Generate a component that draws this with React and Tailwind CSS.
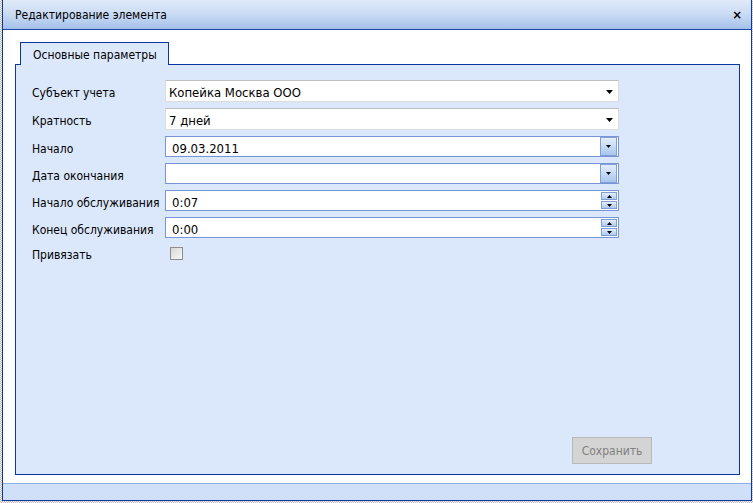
const FONT = "font-['DejaVu_Sans',Tahoma,sans-serif] font-stretch-condensed";

const ROWS = [
  { label: 'Субъект учета', value: 'Копейка Москва ООО', kind: 'combo', h: 'h-[28px]' },
  { label: 'Кратность', value: '7 дней', kind: 'combo', h: 'h-[28px]' },
  { label: 'Начало', value: '09.03.2011', kind: 'date', h: 'h-[27px]' },
  { label: 'Дата окончания', value: '', kind: 'date', h: 'h-[27px]' },
  { label: 'Начало обслуживания', value: '0:07', kind: 'spin', h: 'h-[27px]' },
  { label: 'Конец обслуживания', value: '0:00', kind: 'spin', h: 'h-[27px]' },
];

function Arrow({ up = false, big = false }) {
  const w = big ? 7 : 5;
  const h = big ? 4 : 3;
  return (
    <svg width={w} height={h} viewBox={`0 0 ${w} ${h}`} className="block">
      {up
        ? <polygon points={`0,${h} ${w},${h} ${w / 2},0`} fill="#000" />
        : <polygon points={`0,0 ${w},0 ${w / 2},${h}`} fill="#000" />}
    </svg>
  );
}

function Field({ row }) {
  if (row.kind === 'combo') {
    return (
      <div className="w-[454px] h-[22px] flex items-center bg-white border border-[#dcdcdc] border-t-[#c0c0c0]">
        <span className="flex-1 pl-[3px] pt-[3px] text-[13px] text-black leading-none whitespace-nowrap">{row.value}</span>
        <span className="w-[17px] pt-[2px] flex justify-center"><Arrow big /></span>
      </div>
    );
  }
  return (
    <div className="w-[454px] h-[21px] flex items-center bg-white border border-[#7895d6]">
      <span className="flex-1 pl-[6px] pt-[3px] text-[13px] text-black leading-none whitespace-nowrap">{row.value}</span>
      {row.kind === 'date' ? (
        <span className="w-[17px] h-[19px] mr-px flex items-center justify-center border border-[#7f9fd8] bg-gradient-to-b from-[#e4eefc] to-[#a9c5ef]">
          <Arrow />
        </span>
      ) : (
        <span className="mr-px flex flex-col gap-px">
          <span className="w-[16px] h-[8px] flex items-center justify-center border border-[#7f9fd8] bg-gradient-to-b from-[#e4eefc] to-[#aec8ef]"><Arrow up /></span>
          <span className="w-[16px] h-[8px] flex items-center justify-center border border-[#7f9fd8] bg-gradient-to-b from-[#e4eefc] to-[#aec8ef]"><Arrow /></span>
        </span>
      )}
    </div>
  );
}

export default function App() {
  return (
    <div className={`w-[753px] h-[503px] pl-[2px] pr-[1px] bg-[repeating-conic-gradient(#b9b9b9_0_25%,#f4f4f4_0_50%)] bg-[length:2px_2px] ${FONT}`}>
      <div className="h-[501px] flex flex-col border-x border-b border-[#0b35a0] bg-white">
        {/* заголовок окна */}
        <div className="h-[30px] shrink-0 flex items-center justify-between pl-[12px] pr-[9px] border-b border-[#1a45a5] bg-gradient-to-b from-[#e0eaf8] via-[#c9dbf4] to-[#a4c0ea]">
          <span className="text-[12px] text-black whitespace-nowrap">Редактирование элемента</span>
          <span className="text-[13px] font-bold text-black leading-none">×</span>
        </div>

        {/* тело */}
        <div className="flex-1 flex flex-col pt-[12px] pl-[12px] pr-[11px] pb-[8px]">
          <div className="ml-[5px] w-[149px] h-[23px] -mb-px relative z-10 flex items-center pl-[12px] pt-[2px] border-x border-t border-[#0b35a0] bg-[#dce9fd]">
            <span className="text-[12px] text-black whitespace-nowrap">Основные параметры</span>
          </div>
          <div className="flex-1 flex flex-col border border-[#0b35a0] bg-[#dbe8fc] pl-[16px] pt-[15px]">
            {ROWS.map((row) => (
              <div key={row.label} className={`${row.h} flex items-start`}>
                <span className="w-[133px] h-[22px] pt-[4px] flex items-center text-[12px] text-black whitespace-nowrap">{row.label}</span>
                <Field row={row} />
              </div>
            ))}
            <div className="h-[20px] flex items-start">
              <span className="w-[133px] h-[20px] pt-[2px] flex items-center text-[12px] text-black">Привязать</span>
              <span className="ml-[5px] mt-[3px] w-[13px] h-[13px] border border-[#8e8e8e] bg-gradient-to-br from-[#d8d8d8] to-[#f8f8f8]" />
            </div>
            <button className="mt-auto mb-[10px] mr-[87px] self-end w-[80px] h-[27px] border border-[#bababa] bg-[#d4d4d4] text-[12px] text-[#808080]">
              Сохранить
            </button>
          </div>
        </div>

        {/* нижняя полоса */}
        <div className="h-[17px] shrink-0 border-t border-[#8fb0e2] bg-[#cfe0f8]" />
      </div>
    </div>
  );
}
